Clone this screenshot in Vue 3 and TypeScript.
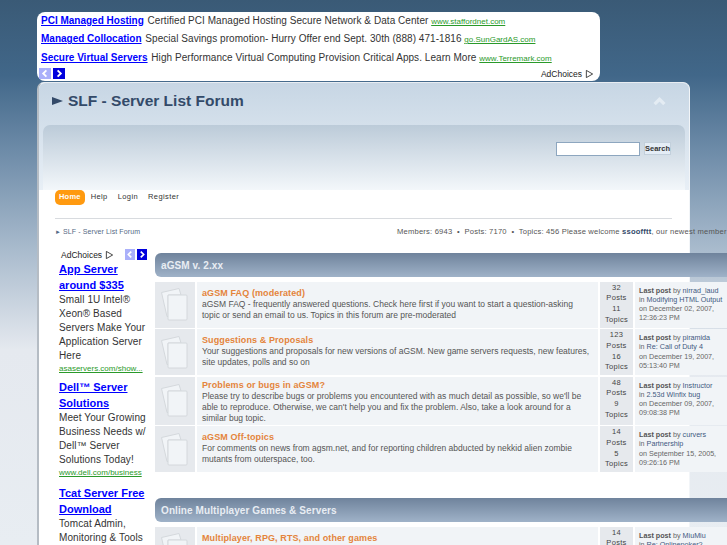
<script setup lang="ts">
interface Board {
  title: string
  desc: string
  posts: string
  topics: string
  by: string
  topic: string
  date: string
  time: string
  tall?: boolean
}
interface Category {
  name: string
  boards: Board[]
}
const categories: Category[] = [
  {
    name: 'aGSM v. 2.xx',
    boards: [
      { title: 'aGSM FAQ (moderated)', desc: 'aGSM FAQ - frequently answered questions. Check here first if you want to start a question-asking topic or send an email to us. Topics in this forum are pre-moderated', posts: '32', topics: '11', by: 'nirrad_laud', topic: 'Modifying HTML Output', date: 'on December 02, 2007,', time: '12:36:23 PM' },
      { title: 'Suggestions & Proposals', desc: 'Your suggestions and proposals for new versions of aGSM. New game servers requests, new features, site updates, polls and so on', posts: '123', topics: '16', by: 'piramida', topic: 'Re: Call of Duty 4', date: 'on December 19, 2007,', time: '05:13:40 PM' },
      { title: 'Problems or bugs in aGSM?', desc: "Please try to describe bugs or problems you encountered with as much detail as possible, so we'll be able to reproduce. Otherwise, we can't help you and fix the problem. Also, take a look around for a similar bug topic.", posts: '48', topics: '9', by: 'Instructor', topic: '2.53d Winfix bug', date: 'on December 09, 2007,', time: '09:08:38 PM', tall: true },
      { title: 'aGSM Off-topics', desc: 'For comments on news from agsm.net, and for reporting children abducted by nekkid alien zombie mutants from outerspace, too.', posts: '14', topics: '5', by: 'curvers', topic: 'Partnership', date: 'on September 15, 2005,', time: '09:26:16 PM' },
    ],
  },
  {
    name: 'Online Multiplayer Games & Servers',
    boards: [
      { title: 'Multiplayer, RPG, RTS, and other games', desc: '', posts: '14', topics: '5', by: 'MiuMiu', topic: 'Re: Onlinepoker?', date: '', time: '' },
    ],
  },
]
const topAds = [
  { t: 'PCI Managed Hosting', d: 'Certified PCI Managed Hosting Secure Network & Data Center', u: 'www.staffordnet.com' },
  { t: 'Managed Collocation', d: 'Special Savings promotion- Hurry Offer end Sept. 30th (888) 471-1816', u: 'go.SunGardAS.com' },
  { t: 'Secure Virtual Servers', d: 'High Performance Virtual Computing Provision Critical Apps. Learn More', u: 'www.Terremark.com' },
]
const sideAds = [
  { t: 'App Server around $335', d: 'Small 1U Intel® Xeon® Based Servers Make Your Application Server Here', u: 'asaservers.com/show...' },
  { t: 'Dell™ Server Solutions', d: 'Meet Your Growing Business Needs w/ Dell™ Server Solutions Today!', u: 'www.dell.com/business' },
  { t: 'Tcat Server Free Download', d: 'Tomcat Admin, Monitoring & Tools', u: '' },
]
</script>

<template>
  <div class="page">
    <section class="adtop">
      <p v-for="a in topAds" :key="a.t" class="adline">
        <a class="adtitle">{{ a.t }}</a> <span class="addesc">{{ a.d }}</span> <a class="adurl">{{ a.u }}</a>
      </p>
      <div class="adfoot">
        <span class="arrows">
          <span class="arrow off"><svg viewBox="0 0 12 12"><path d="M7.5 2.5 4 6l3.5 3.5" /></svg></span>
          <span class="arrow"><svg viewBox="0 0 12 12"><path d="M4.5 2.5 8 6l-3.5 3.5" /></svg></span>
        </span>
        <span class="adchoices">AdChoices <svg viewBox="0 0 10 10"><path d="M1.5 1 8.5 5l-7 4z" /></svg></span>
      </div>
    </section>

    <main class="wrap">
      <header class="head">
        <div class="titlebar">
          <h1><svg class="tri" viewBox="0 0 11 8"><path d="M0 0l11 4-11 4z" /></svg>SLF - Server List Forum</h1>
          <svg class="collapse" viewBox="0 0 12 8"><path d="M1.5 6.5 6 2l4.5 4.5" /></svg>
        </div>
        <div class="searchbox">
          <input class="sinput" type="text" aria-label="Search" />
          <button class="sbtn" type="button">Search</button>
        </div>
      </header>

      <nav class="nav">
        <a class="tab active">Home</a>
        <a class="tab">Help</a>
        <a class="tab">Login</a>
        <a class="tab">Register</a>
      </nav>

      <div class="crumbs">
        <span class="crumb"><span class="mini">►</span> SLF - Server List Forum</span>
        <span class="stats">Members: 6943 &nbsp;•&nbsp; Posts: 7170 &nbsp;•&nbsp; Topics: 456 Please welcome <b>ssoofftt</b>, our newest member</span>
      </div>

      <div class="body">
        <aside class="side">
          <div class="sidehead">
            <span class="adchoices">AdChoices <svg viewBox="0 0 10 10"><path d="M1.5 1 8.5 5l-7 4z" /></svg></span>
            <span class="arrows">
              <span class="arrow off"><svg viewBox="0 0 12 12"><path d="M7.5 2.5 4 6l3.5 3.5" /></svg></span>
              <span class="arrow"><svg viewBox="0 0 12 12"><path d="M4.5 2.5 8 6l-3.5 3.5" /></svg></span>
            </span>
          </div>
          <div v-for="a in sideAds" :key="a.t" class="sidead">
            <a class="sidetitle">{{ a.t }}</a>
            <p class="sidedesc">{{ a.d }}</p>
            <a v-if="a.u" class="sideurl">{{ a.u }}</a>
          </div>
        </aside>

        <div class="boards">
          <section v-for="c in categories" :key="c.name" class="cat">
            <h2 class="catbar">{{ c.name }}</h2>
            <div class="rows">
              <article v-for="b in c.boards" :key="b.title" class="row" :class="{ tall: b.tall }">
                <div class="iconcell">
                  <svg viewBox="0 0 27 33" class="pages">
                    <path d="M.5 4.500 18 .5 20 7H7v21.500H6z" />
                    <rect x="7" y="7" width="19" height="25" rx="1" />
                  </svg>
                </div>
                <div class="info">
                  <h3>{{ b.title }}</h3>
                  <p>{{ b.desc }}</p>
                </div>
                <div class="count">{{ b.posts }}<br />Posts<br />{{ b.topics }}<br />Topics</div>
                <div class="last">
                  <b>Last post</b> by <a>{{ b.by }}</a><br />
                  in <a>{{ b.topic }}</a><br />
                  {{ b.date }}<br />{{ b.time }}
                </div>
              </article>
            </div>
          </section>
        </div>
      </div>
    </main>
  </div>
</template>

<style scoped>
.page {
  width: 727px;
  height: 545px;
  overflow: hidden;
  box-sizing: border-box;
  padding: 12px 0 0 37px;
  font-family: "Liberation Sans", Arial, sans-serif;
  background: linear-gradient(#3a5a76 0, #416789 75px, #6d8ba8 150px, #a9bbcd 250px, #e5e9ef 350px, #e8edf2 100%);
}
.adtop {
  width: 563px;
  height: 69px;
  box-sizing: border-box;
  background: #fff;
  border-radius: 8px;
  padding: 0.500px 4px 0;
  color: #333;
  font-size: 10px;
}
.adline {
  margin: 0;
  height: 18.500px;
  line-height: 16px;
  white-space: nowrap;
}
.adtitle {
  color: #00f;
  font-weight: bold;
  text-decoration: underline;
}
.addesc {
  letter-spacing: 0.050px;
  margin-left: 1px;
}
.adurl {
  color: #2a9a2a;
  font-size: 8px;
  text-decoration: underline;
}
.adfoot {
  display: flex;
  justify-content: space-between;
  align-items: center;
  margin: 0 2px 0 -2px;
}
.arrows {
  display: flex;
  gap: 2px;
}
.arrow {
  width: 12px;
  height: 11px;
  background: #00d;
  display: block;
}
.arrow.off {
  background: #aab0fa;
}
.arrow svg {
  display: block;
  width: 12px;
  height: 11px;
  fill: none;
  stroke: #fff;
  stroke-width: 2;
}
.adchoices {
  color: #222;
  font-size: 8.500px;
  display: flex;
  align-items: center;
  gap: 3px;
}
.adchoices svg {
  width: 9px;
  height: 10px;
  fill: none;
  stroke: #333;
  stroke-width: 1;
}
.wrap {
  margin-top: 1px;
  width: 653px;
  height: 480px;
  box-sizing: border-box;
  background: #fff;
  border: 1px solid #b5bcc4;
  border-top-color: #e8edf2;
  border-right-color: #f2f5f8;
  border-left-width: 2px;
  border-radius: 7px 7px 0 0;
}
.head {
  height: 107px;
  background: linear-gradient(#c7d6e4, #e8eff6);
  border-radius: 6px 6px 0 0;
  padding: 0 4px;
  box-sizing: border-box;
}
.titlebar {
  height: 42px;
  box-sizing: border-box;
  display: flex;
  align-items: center;
  justify-content: space-between;
  padding: 0 19px 6px 9px;
}
h1 {
  margin: 0;
  display: flex;
  align-items: center;
  gap: 5px;
  font-size: 15.500px;
  color: #334a69;
  font-weight: bold;
}
.tri {
  width: 11px;
  height: 8px;
  fill: #334a69;
}
.collapse {
  width: 13px;
  height: 9px;
  fill: none;
  stroke: #e4ecf3;
  stroke-width: 3;
}
.searchbox {
  height: 65px;
  box-sizing: border-box;
  background: linear-gradient(#bccbd9, #f3f7fa);
  border-radius: 7px 7px 0 0;
  display: flex;
  justify-content: flex-end;
  align-items: flex-start;
  gap: 4px;
  padding: 17px 14px 0 0;
}
.sinput {
  width: 84px;
  height: 14px;
  padding: 0;
  box-sizing: border-box;
  background: #fff;
  border: 1px solid #8da6bf;
  margin: 0;
}
.sbtn {
  width: 27px;
  height: 13px;
  margin: 0;
  padding: 0;
  border: 1px solid #c3d0dc;
  background: #e4edf6;
  color: #333;
  font: bold 7.500px "Liberation Sans", Arial, sans-serif;
}
.nav {
  display: flex;
  align-items: flex-start;
  margin: 0 17px 0 16px;
  height: 28px;
  border-bottom: 1px solid #d8dbdf;
  gap: 2px;
  font-size: 7.500px;
  color: #333;
}
.tab {
  height: 15px;
  line-height: 13px;
  padding: 0 4px;
  letter-spacing: 0.400px;
}
.tab.active {
  background: #ff9a10;
  color: #fff;
  font-weight: bold;
  border-radius: 5px;
  letter-spacing: 0.200px;
}
.crumbs {
  display: flex;
  margin: 8px 0 0 16px;
  white-space: nowrap;
  font-size: 7.600px;
  line-height: 10px;
  color: #555;
}
.crumb {
  flex: none;
  width: 342px;
  color: #556a85;
  font-size: 7px;
  letter-spacing: 0.100px;
}
.mini {
  font-size: 6px;
}
.stats {
  letter-spacing: 0.200px;
}
.stats b {
  color: #334a69;
}
.body {
  display: flex;
  margin-top: 16px;
}
.side {
  flex: none;
  width: 94px;
  margin-left: 20px;
  margin-right: 2px;
  font-size: 10px;
  color: #333;
}
.sidehead {
  display: flex;
  justify-content: space-between;
  align-items: flex-start;
  height: 13px;
  padding: 0 6px 0 2px;
  margin-top: -4px;
}
.sidehead .adchoices {
  margin-top: 1px;
}
.sidehead .arrow,
.sidehead .arrow svg {
  width: 10px;
  height: 11px;
}
.sidead {
  margin-bottom: 7px;
}
.sidead:nth-child(2) {
  margin-bottom: 5px;
}
.sidetitle {
  display: block;
  color: #00f;
  font-weight: bold;
  font-size: 11px;
  line-height: 15.500px;
  text-decoration: underline;
  width: 90px;
}
.sidedesc {
  margin: 0;
  line-height: 14px;
  letter-spacing: 0.100px;
  width: 90px;
}
.sideurl {
  display: block;
  color: #2a9a2a;
  font-size: 8px;
  line-height: 12px;
  text-decoration: underline;
  white-space: nowrap;
}
.boards {
  flex: none;
  width: 590px;
}
.cat {
  margin-bottom: 26px;
}
.catbar {
  margin: 0;
  height: 24px;
  line-height: 25px;
  box-sizing: border-box;
  padding-left: 6px;
  color: #e8edf3;
  font-size: 10px;
  font-weight: bold;
  letter-spacing: 0.100px;
  border-radius: 6px 0 0 6px;
  background: linear-gradient(#6f839c, #9fb2c8);
}
.rows {
  display: flex;
  flex-direction: column;
  gap: 1.500px;
  margin-top: 4.500px;
}
.row {
  display: grid;
  grid-template-columns: 40px 401px 33px 1fr;
  gap: 2px;
  height: 46px;
}
.row.tall {
  height: 48px;
}
.iconcell {
  background: #e6e9ed;
  display: flex;
  align-items: center;
  justify-content: center;
  padding-right: 2px;
  box-sizing: border-box;
}
.pages {
  width: 27px;
  height: 33px;
  fill: #f1f4f7;
  stroke: #d4d8dc;
  stroke-width: 1;
}
.info {
  background: #f1f4f7;
  padding: 6px 5px 0;
  box-sizing: border-box;
  font-size: 8.500px;
  line-height: 11px;
  color: #555;
}
.row.tall .info {
  padding-top: 3px;
}
.info h3 {
  margin: 0;
  font-size: 9px;
  line-height: 11px;
  font-weight: bold;
  color: #e4843c;
  letter-spacing: 0.100px;
}
.info p {
  margin: 0;
}
.count {
  background: #e6e9ed;
  text-align: center;
  font-size: 7.500px;
  line-height: 10.800px;
  color: #444;
  letter-spacing: 0.300px;
  padding-top: 1px;
}
.last {
  background: #f1f4f7;
  padding: 4px;
  font-size: 7.200px;
  line-height: 9.300px;
  color: #666;
  white-space: nowrap;
}
.last b {
  color: #555;
}
.last a {
  color: #41597f;
}
</style>

<style>
html, body { margin: 0; overflow: hidden; }
</style>
